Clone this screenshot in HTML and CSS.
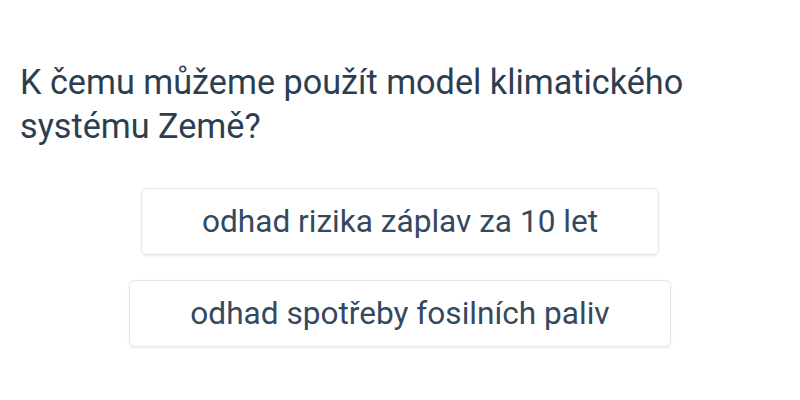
FILE: index.html
```html
<!DOCTYPE html>
<html lang="cs">
<head>
<meta charset="utf-8">
<link rel="stylesheet" href="styles.css">
</head>
<body>
<main class="quiz">
  <h1 class="question">K čemu můžeme použít model klimatického systému Země?</h1>
  <div class="answers">
    <button class="answer">odhad rizika záplav za 10 let</button>
    <button class="answer">odhad spotřeby fosilních paliv</button>
  </div>
</main>
</body>
</html>
```

FILE: styles.css
```css
html, body {
  margin: 0;
  padding: 0;
  background: #ffffff;
}
body {
  font-family: Roboto, "Noto Sans", sans-serif;
  color: #2c3e50;
  width: 800px;
  height: 400px;
  overflow: hidden;
}
.quiz {
  padding: 60px 20px 0 20px;
}
.question {
  margin: 0;
  font-size: 34.2px;
  font-weight: 400;
  line-height: 44px;
  max-width: 720px;
}
.answers {
  margin-top: 40px;
  display: flex;
  flex-direction: column;
  align-items: center;
  gap: 25px;
}
.answer {
  font-family: Roboto, "Noto Sans", sans-serif;
  font-size: 31.6px;
  color: #34495e;
  background: #ffffff;
  border: 1px solid #e6e6e6;
  border-radius: 6px;
  box-shadow: 0 1px 3px rgba(0,0,0,0.08);
  padding: 0 60px;
  height: 67px;
  line-height: 65px;
}
```
